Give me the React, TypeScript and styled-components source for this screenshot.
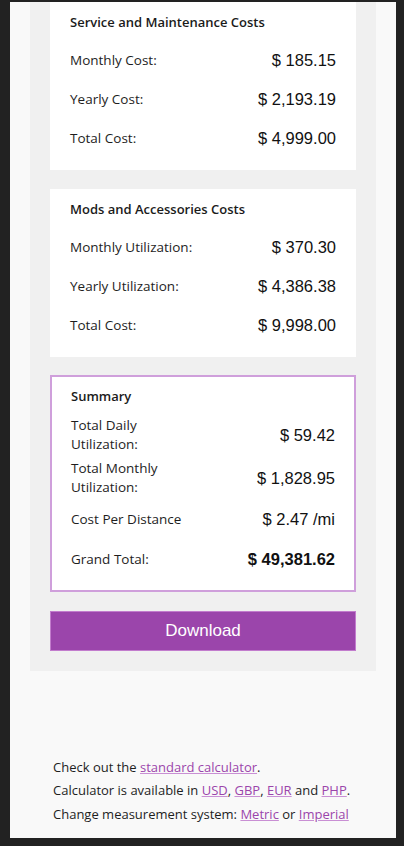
import React from "react";
import styled, { createGlobalStyle } from "styled-components";

const GlobalStyle = createGlobalStyle`
  html, body { margin: 0; padding: 0; background: #222222; }
  body { font-family: "Open Sans", "Noto Sans", sans-serif; }
`;

const Frame = styled.div`
  box-sizing: border-box;
  margin: 2px 8px 0 10px;
  width: 386px;
  height: 836px;
  background: #f9f9f9;
  padding: 0 20px;
  overflow: hidden;
`;

const Panel = styled.div`
  background: #f0f0f0;
  padding: 0 20px 20px;
  display: flex;
  flex-direction: column;
  gap: 18.5px;
`;

const Card = styled.section<{ $accent?: boolean }>`
  box-sizing: border-box;
  background: #ffffff;
  border: ${(p) => (p.$accent ? "2px solid #cf9fdb" : "none")};
  padding: ${(p) => (p.$accent ? "10px 19px 10px" : "11px 20px 12px")};
`;

const Heading = styled.h3<{ $tight?: boolean }>`
  margin: 0 0 ${(p) => (p.$tight ? "7.5px" : "9px")};
  font-family: "Open Sans", sans-serif;
  font-size: 13px;
  font-weight: 600;
  line-height: 19px;
  color: #1b1b1b;
`;

const Row = styled.div<{ $compact?: boolean }>`
  display: grid;
  grid-template-columns: ${(p) => (p.$compact ? "120px 1fr" : "50% 50%")};
  align-items: center;
  min-height: ${(p) => (p.$compact ? "40px" : "39px")};
  padding: ${(p) => (p.$compact ? "2.5px 0" : "0")};
  box-sizing: border-box;
`;

const Label = styled.span`
  font-family: "Open Sans", sans-serif;
  font-size: 13.5px;
  line-height: 19px;
  color: #1e1e1e;
`;

const Value = styled.span<{ $bold?: boolean }>`
  text-align: right;
  font-family: "Liberation Sans", Arial, sans-serif;
  font-size: 16.5px;
  line-height: 19px;
  font-weight: ${(p) => (p.$bold ? 700 : 400)};
  color: #111111;
`;

const DownloadButton = styled.button`
  box-sizing: border-box;
  height: 40px;
  width: 100%;
  margin: 1px 0 0;
  background: #9b45ab;
  border: 1px solid #c27ccd;
  color: #ffffff;
  font-family: "Liberation Sans", Arial, sans-serif;
  font-size: 17px;
  cursor: pointer;
`;

const Footer = styled.footer`
  padding: 84.5px 0 0 23px;
  display: flex;
  flex-direction: column;
`;

const FooterLine = styled.p`
  margin: 0;
  font-family: "Open Sans", sans-serif;
  font-size: 13px;
  line-height: 23.5px;
  color: #1e1e1e;
`;

const Link = styled.a`
  color: #9b45ab;
  text-decoration: underline;
  text-decoration-color: #c98fd4;
`;

type Item = { label: string; value: string; bold?: boolean };

const service: Item[] = [
  { label: "Monthly Cost:", value: "$ 185.15" },
  { label: "Yearly Cost:", value: "$ 2,193.19" },
  { label: "Total Cost:", value: "$ 4,999.00" },
];

const mods: Item[] = [
  { label: "Monthly Utilization:", value: "$ 370.30" },
  { label: "Yearly Utilization:", value: "$ 4,386.38" },
  { label: "Total Cost:", value: "$ 9,998.00" },
];

const summary: Item[] = [
  { label: "Total Daily Utilization:", value: "$ 59.42" },
  { label: "Total Monthly Utilization:", value: "$ 1,828.95" },
  { label: "Cost Per Distance", value: "$ 2.47 /mi" },
  { label: "Grand Total:", value: "$ 49,381.62", bold: true },
];

function CostCard({ title, items, accent }: { title: string; items: Item[]; accent?: boolean }) {
  return (
    <Card $accent={accent}>
      <Heading $tight={accent}>{title}</Heading>
      {items.map((it) => (
        <Row key={it.label} $compact={accent}>
          <Label>{it.label}</Label>
          <Value $bold={it.bold}>{it.value}</Value>
        </Row>
      ))}
    </Card>
  );
}

export default function App() {
  return (
    <>
      <GlobalStyle />
      <Frame>
        <Panel>
          <CostCard title="Service and Maintenance Costs" items={service} />
          <CostCard title="Mods and Accessories Costs" items={mods} />
          <CostCard title="Summary" items={summary} accent />
          <DownloadButton>Download</DownloadButton>
        </Panel>
        <Footer>
          <FooterLine>
            Check out the <Link href="#">standard calculator</Link>.
          </FooterLine>
          <FooterLine>
            Calculator is available in <Link href="#">USD</Link>, <Link href="#">GBP</Link>,{" "}
            <Link href="#">EUR</Link> and <Link href="#">PHP</Link>.
          </FooterLine>
          <FooterLine>
            Change measurement system: <Link href="#">Metric</Link> or <Link href="#">Imperial</Link>
          </FooterLine>
        </Footer>
      </Frame>
    </>
  );
}
